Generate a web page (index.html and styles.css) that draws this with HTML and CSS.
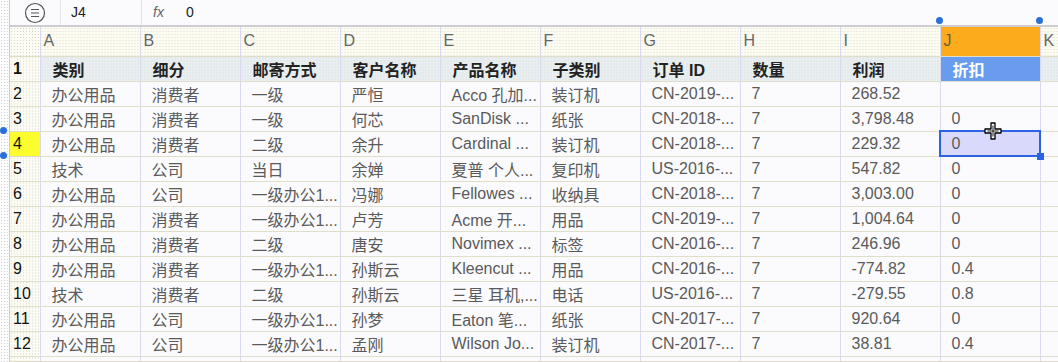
FILE: index.html
```html
<html>
<head>
    <title>表格</title>
    <meta charset="UTF-8" name="viewport" content="width=device-width, initial-scale=1">
    <link rel="stylesheet" href="styles.css">
</head>

<body>
    <div class="app">
        <div class="gutter"></div>
        <div class="main">
            <div class="fbar">
                <div class="menu">
                    <svg width="22" height="22" viewBox="0 0 22 22">
                        <circle cx="11" cy="11" r="9.5" fill="none" stroke="#555" stroke-width="1.2"/>
                        <path d="M7 7.5h8M7 11h8M7 14.5h8" stroke="#555" stroke-width="1.2"/>
                    </svg>
                </div>
                <div class="ref">J4</div>
                <div class="formula"><i>fx</i><span>0</span></div>
            </div>
            <table class="sheet">
                <colgroup>
                    <col class="c-num">
                    <col class="c"><col class="c"><col class="c"><col class="c"><col class="c">
                    <col class="c"><col class="c"><col class="c"><col class="c"><col class="c">
                    <col>
                </colgroup>
                <tr class="letters">
                    <td class="num"></td>
                    <td>A</td><td>B</td><td>C</td><td>D</td><td>E</td>
                    <td>F</td><td>G</td><td>H</td><td>I</td><td class="active">J</td><td>K</td>
                </tr>
                <tr class="head">
                    <td class="num">1</td>
                    <td>类别</td><td>细分</td><td>邮寄方式</td><td>客户名称</td><td>产品名称</td>
                    <td>子类别</td><td>订单 ID</td><td>数量</td><td>利润</td><td class="picked">折扣</td><td></td>
                </tr>
                <tr>
                    <td class="num">2</td>
                    <td>办公用品</td><td>消费者</td><td>一级</td><td>严恒</td><td>Acco 孔加...</td>
                    <td>装订机</td><td>CN-2019-...</td><td>7</td><td>268.52</td><td></td><td></td>
                </tr>
                <tr>
                    <td class="num">3</td>
                    <td>办公用品</td><td>消费者</td><td>一级</td><td>何芯</td><td>SanDisk ...</td>
                    <td>纸张</td><td>CN-2018-...</td><td>7</td><td>3,798.48</td><td>0</td><td></td>
                </tr>
                <tr>
                    <td class="num now">4</td>
                    <td>办公用品</td><td>消费者</td><td>二级</td><td>余升</td><td>Cardinal ...</td>
                    <td>装订机</td><td>CN-2018-...</td><td>7</td><td>229.32</td><td class="sel">0</td><td></td>
                </tr>
                <tr>
                    <td class="num">5</td>
                    <td>技术</td><td>公司</td><td>当日</td><td>余婵</td><td>夏普 个人...</td>
                    <td>复印机</td><td>US-2016-...</td><td>7</td><td>547.82</td><td>0</td><td></td>
                </tr>
                <tr>
                    <td class="num">6</td>
                    <td>办公用品</td><td>公司</td><td>一级办公1...</td><td>冯娜</td><td>Fellowes ...</td>
                    <td>收纳具</td><td>CN-2018-...</td><td>7</td><td>3,003.00</td><td>0</td><td></td>
                </tr>
                <tr>
                    <td class="num">7</td>
                    <td>办公用品</td><td>消费者</td><td>一级办公1...</td><td>卢芳</td><td>Acme 开...</td>
                    <td>用品</td><td>CN-2019-...</td><td>7</td><td>1,004.64</td><td>0</td><td></td>
                </tr>
                <tr>
                    <td class="num">8</td>
                    <td>办公用品</td><td>消费者</td><td>二级</td><td>唐安</td><td>Novimex ...</td>
                    <td>标签</td><td>CN-2016-...</td><td>7</td><td>246.96</td><td>0</td><td></td>
                </tr>
                <tr>
                    <td class="num">9</td>
                    <td>办公用品</td><td>消费者</td><td>一级办公1...</td><td>孙斯云</td><td>Kleencut ...</td>
                    <td>用品</td><td>CN-2016-...</td><td>7</td><td>-774.82</td><td>0.4</td><td></td>
                </tr>
                <tr>
                    <td class="num">10</td>
                    <td>技术</td><td>消费者</td><td>二级</td><td>孙斯云</td><td>三星 耳机,...</td>
                    <td>电话</td><td>US-2016-...</td><td>7</td><td>-279.55</td><td>0.8</td><td></td>
                </tr>
                <tr>
                    <td class="num">11</td>
                    <td>办公用品</td><td>公司</td><td>一级办公1...</td><td>孙梦</td><td>Eaton 笔...</td>
                    <td>纸张</td><td>CN-2017-...</td><td>7</td><td>920.64</td><td>0</td><td></td>
                </tr>
                <tr>
                    <td class="num">12</td>
                    <td>办公用品</td><td>公司</td><td>一级办公1...</td><td>孟刚</td><td>Wilson Jo...</td>
                    <td>装订机</td><td>CN-2017-...</td><td>7</td><td>38.81</td><td>0.4</td><td></td>
                </tr>
                <tr class="cut">
                    <td class="num"></td>
                    <td></td><td></td><td></td><td></td><td></td>
                    <td></td><td></td><td></td><td></td><td></td><td></td>
                </tr>
            </table>
        </div>
    </div>

    <!-- selection handles and mouse cursor sit over the grid -->
    <span class="dot" style="left: 936px; top: 17px"></span>
    <span class="dot" style="left: 1036px; top: 17px"></span>
    <span class="dot" style="left: 0px; top: 127px"></span>
    <span class="dot" style="left: 0px; top: 152px"></span>
    <svg class="cursor" width="20" height="20" viewBox="0 0 20 20">
        <path d="M8 2h4v6h6v4h-6v6h-4v-6h-6v-4h6z" fill="#fff" stroke="#000" stroke-width="1.3" stroke-linejoin="round"/>
        <path d="M10 4.5v11M4.5 10h11" stroke="#000" stroke-width="0.9"/>
    </svg>
</body>
</html>
```

FILE: styles.css
```css
html, body {
    margin: 0;
    padding: 0;
}

body {
    font-family: "Liberation Sans", "Noto Sans CJK SC", sans-serif;
    font-size: 14px;
    color: #5a5a5a;
    background-color: #fbfbfd;
    position: relative;
    width: 1058px;
    height: 362px;
    overflow: hidden;
}

.app {
    display: flex;
    height: 362px;
    overflow: hidden;
}

.gutter {
    width: 9px;
    flex: none;
    background-color: #fdfdfd;
    background-image: radial-gradient(#cfcfd6 0.7px, transparent 0.8px);
    background-size: 3px 3px;
    border-right: 1px solid #c9c9cf;
}

.main {
    flex: 1;
    min-width: 0;
    overflow: hidden;
}

.fbar {
    display: flex;
    height: 25px;
    border-bottom: 2px solid #cdcdd3;
    background-color: #fbfbfd;
}

.menu {
    width: 50px;
    display: flex;
    align-items: center;
    justify-content: center;
    border-right: 1px solid #e2e2e8;
}

.ref {
    width: 70px;
    padding-left: 10px;
    line-height: 25px;
    color: #222;
    border-right: 1px solid #e2e2e8;
}

.formula {
    line-height: 25px;
    padding-left: 11px;
    color: #222;
}

.formula i {
    color: #666;
    margin-right: 22px;
}

.sheet {
    border-collapse: collapse;
    table-layout: fixed;
    width: 1049px;
}

.c-num {
    width: 30px;
}

.c {
    width: 100px;
}

.sheet td {
    height: 24px;
    padding: 0 0 0 11px;
    border-right: 1px solid #d9daf1;
    border-bottom: 1px solid #dfdec8;
    white-space: nowrap;
    overflow: hidden;
    background-color: #fbfbfe;
}

.sheet tr.cut td {
    height: 5px;
}

.sheet td.num {
    padding-left: 3px;
    color: #111;
    background-color: #fcfcf4;
    background-image: radial-gradient(#d8d8cc 0.7px, transparent 0.8px);
    background-size: 3px 3px;
}

.sheet td.now {
    background-color: #fcfc2e;
    background-image: none;
}

.letters td {
    height: 29px;
    padding-left: 3px;
    color: #666;
    background-color: #fcfcf2;
    background-image: radial-gradient(#dedccc 0.7px, transparent 0.8px);
    background-size: 3px 3px;
}

.letters td.active {
    background-color: #fbab1c;
    background-image: none;
    color: #6a5a3a;
}

.head td {
    font-weight: bold;
    color: #222;
    padding-left: 12px;
    background-color: #e9eef0;
    background-image: radial-gradient(#d6dde0 0.7px, transparent 0.8px);
    background-size: 3px 3px;
}

.head td.picked {
    background-color: #6a9cee;
    background-image: none;
    color: #fff;
}

.sheet td.sel {
    position: relative;
    overflow: visible;
    background-color: #d9dafb;
    outline: 2px solid #2b63e3;
    outline-offset: -1px;
}

.sel::after {
    content: "";
    position: absolute;
    right: -4px;
    bottom: -4px;
    width: 7px;
    height: 7px;
    background-color: #2b63e3;
}

.dot {
    position: absolute;
    width: 7px;
    height: 7px;
    border-radius: 50%;
    background-color: #2b6fdc;
}

.cursor {
    position: absolute;
    left: 983px;
    top: 121px;
}
```
